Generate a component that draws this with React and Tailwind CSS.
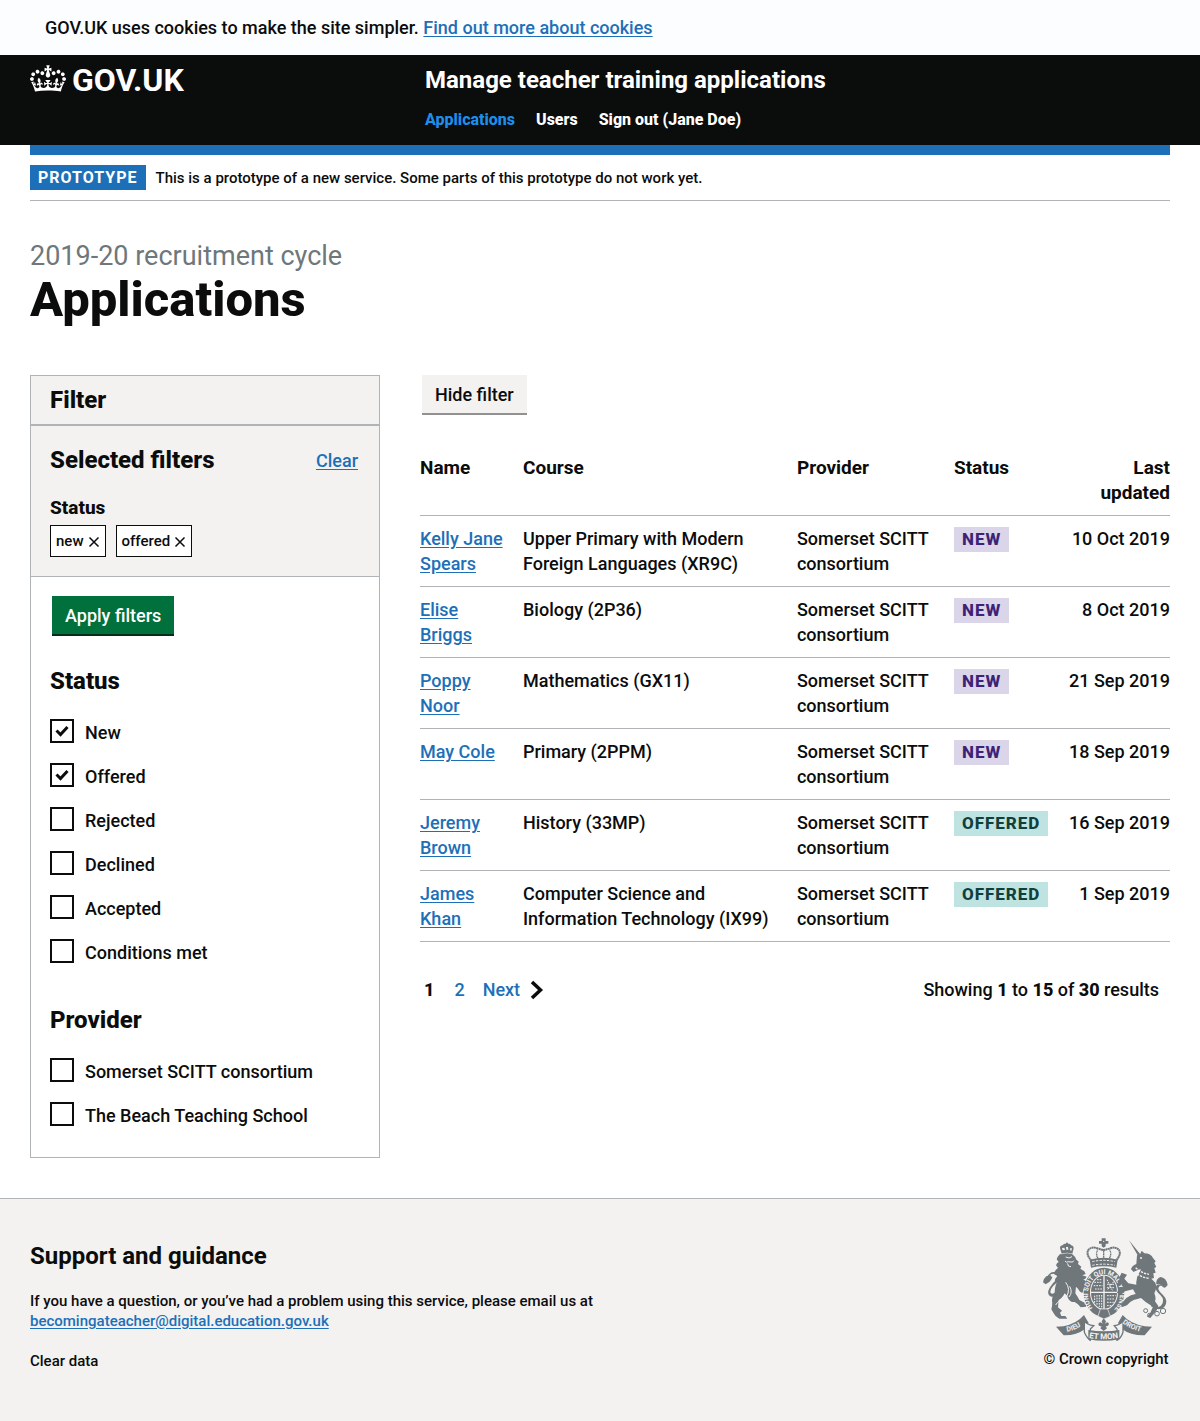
import React from "react";

const LINK = "text-[#1d70b8] underline underline-offset-2 hover:text-[#003078]";

const applications = [
  { name: "Kelly Jane Spears", course: "Upper Primary with Modern Foreign Languages (XR9C)", status: "New", date: "10 Oct 2019" },
  { name: "Elise Briggs", course: "Biology (2P36)", status: "New", date: "8 Oct 2019" },
  { name: "Poppy Noor", course: "Mathematics (GX11)", status: "New", date: "21 Sep 2019" },
  { name: "May Cole", course: "Primary (2PPM)", status: "New", date: "18 Sep 2019" },
  { name: "Jeremy Brown", course: "History (33MP)", status: "Offered", date: "16 Sep 2019" },
  { name: "James Khan", course: "Computer Science and Information Technology (IX99)", status: "Offered", date: "1 Sep 2019" },
];

const statusFilters = [
  { label: "New", checked: true },
  { label: "Offered", checked: true },
  { label: "Rejected" },
  { label: "Declined" },
  { label: "Accepted" },
  { label: "Conditions met" },
];

const providerFilters = [
  { label: "Somerset SCITT consortium" },
  { label: "The Beach Teaching School" },
];

function Crown() {
  return (
    <svg aria-hidden="true" viewBox="0 0 132 97" className="h-[27px] w-9" fill="currentColor">
      <path
        fillRule="evenodd"
        d="M25 30.2c3.5 1.5 7.7-.2 9.1-3.7 1.5-3.6-.2-7.8-3.9-9.2-3.6-1.4-7.6.3-9.1 3.9-1.4 3.5.3 7.5 3.9 9zM9 39.5c3.6 1.5 7.8-.2 9.2-3.7 1.5-3.6-.2-7.8-3.9-9.1-3.6-1.5-7.6.2-9.1 3.8-1.4 3.5.3 7.5 3.8 9zM4.4 57.2c3.5 1.5 7.7-.2 9.1-3.8 1.5-3.6-.2-7.7-3.9-9.1-3.5-1.5-7.6.3-9.1 3.8-1.4 3.5.3 7.6 3.9 9.1zm38.3-21.4c3.5 1.5 7.7-.2 9.1-3.8 1.5-3.6-.2-7.7-3.9-9.1-3.6-1.5-7.6.3-9.1 3.8-1.3 3.6.4 7.7 3.9 9.1zm64.4-5.6c-3.6 1.5-7.8-.2-9.1-3.7-1.5-3.6.2-7.8 3.8-9.2 3.6-1.4 7.7.3 9.2 3.9 1.3 3.5-.4 7.5-3.9 9zm15.9 9.3c-3.6 1.5-7.7-.2-9.1-3.7-1.5-3.6.2-7.8 3.7-9.1 3.6-1.5 7.7.2 9.2 3.8 1.5 3.5-.3 7.5-3.8 9zm4.7 17.7c-3.6 1.5-7.8-.2-9.2-3.8-1.5-3.6.2-7.7 3.9-9.1 3.6-1.5 7.7.3 9.2 3.8 1.3 3.5-.4 7.6-3.9 9.1zM89.3 35.8c-3.6 1.5-7.8-.2-9.2-3.8-1.4-3.6.2-7.7 3.9-9.1 3.6-1.5 7.7.3 9.2 3.8 1.4 3.6-.3 7.7-3.9 9.1zM69.7 17.7l8.9 4.7V9.3l-8.9 2.8c-.2-.3-.5-.6-.9-.9L72.4 0H59.6l3.5 11.2c-.3.3-.6.5-.9.9l-8.8-2.8v13.1l8.8-4.7c.3.3.6.7.9.9l-5 15.4v.1c-.2.8-.4 1.6-.4 2.4 0 4.1 3.1 7.5 7 8.1h.2c.3 0 .7.1 1 .1.4 0 .7 0 1-.1h.2c4-.6 7.1-4.1 7.1-8.1 0-.8-.1-1.7-.4-2.4V34l-5.1-15.4c.4-.2.7-.6 1-.9zM66 92.8c16.9 0 32.8 1.1 47.1 3.2 4-16.9 8.9-26.7 14-33.5l-9.6-3.4c1 4.9 1.1 7.2 0 10.2-1.5-1.4-3-4.3-4.2-8.7L108.6 76c2.8-2 5-3.2 7.5-3.3-4.4 9.4-10 11.9-13.6 11.2-4.3-.8-6.3-4.6-5.6-7.9 1-4.7 5.7-5.9 8-.5 4.3-8.7-3-11.4-7.6-8.8 7.1-7.2 7.9-13.5 2.1-21.1-8 6.1-8.1 12.3-4.5 20.8-4.7-5.4-12.1-2.5-9.5 6.2 3.4-5.2 7.9-2 7.2 3.1-.6 4.3-6.4 7.8-13.5 7.2-10.3-.9-10.9-8-11.2-13.8 2.5-.5 7.1 1.8 11 7.3L80.2 60c-4.1 4.4-8 5.3-12.3 5.4 1.4-4.4 8-11.6 8-11.6H55.5s6.4 7.2 7.9 11.6c-4.2-.1-8-1-12.3-5.4l1.4 16.4c3.9-5.5 8.5-7.7 10.9-7.3-.3 5.8-.9 12.8-11.1 13.8-7.2.6-12.9-2.9-13.5-7.2-.7-5 3.8-8.3 7.1-3.1 2.7-8.7-4.6-11.6-9.4-6.2 3.7-8.5 3.6-14.7-4.6-20.8-5.8 7.6-5 13.9 2.2 21.1-4.7-2.6-11.9.1-7.7 8.8 2.3-5.5 7.1-4.2 8.1.5.7 3.3-1.3 7.1-5.7 7.9-3.5.7-9-1.8-13.5-11.2 2.5.1 4.7 1.3 7.5 3.3l-4.7-15.4c-1.2 4.4-2.7 7.2-4.3 8.7-1.1-3-.9-5.3 0-10.2l-9.5 3.4c5 6.9 9.9 16.7 14 33.5 14.8-2.1 30.8-3.2 47.7-3.2z"
      />
    </svg>
  );
}

function Crest() {
  const ink = "#6f777b";
  const paper = "#f3f2f1";
  return (
    <svg aria-hidden="true" viewBox="33 24 384 312" className="h-[104px] w-32" fill={ink}>
      {/* lion's crown */}
      <path d="M92 74l-5-17q0-8 8-8 3-6 9-4l1-4h6l1 4q6-2 8 4 8 1 8 9l-4 16q-16-5-32 0z" />
      <path d="M95 64l-2-7 7-1 2 7zM106 62l-1-8h6l1 8zM117 64l1-7 5 1-2 7z" fill={paper} />
      {/* lion */}
      <path d="M93 76q15-6 31 0l9 9 2 6 8 7-2 7 10 8-3 6 12 8 4 8-10 4 13 4q-3 8-10 8l8 6-6 12 10 6-12 6-2 10q-8 0-14-12l-6-6-2 20q8 12 12 20l16 8q6 6 4 12l-16 2q-6-10-18-16l-8 0q-12-6-14-18l-8-8q-8 16-18 20l-2 22 12 10-6 6 4 10h12l6 8h-24q-14-8-18-18l-6-10q4-14 2-26 0-14 8-20 0-22 6-34-8-4-4-12l6-8-10-6q2-12 12-18l-6-8q2-8 8-10l-6-8q2-8 10-16z" />
      <path d="M104 84l10 3 9-4M102 96q4 6 10 2l8 1q6 2 8-4M110 103l2 8 8 2" fill="none" stroke={paper} strokeWidth="3" />
      <path d="M86 190q-16 18-28 12-12-8-2-26 8-14 20-24 12-14-8-18-12 0-20 14 2-12 14-18 20-4 24 10 2 14-14 26-14 12-14 24 4 12 26-10" />
      <path d="M36 160l8 6 12-8 8-12-6-8-12 4q-8 6-10 18z" />
      <path d="M104 160q16 20 2 44M116 172q10 18-2 32M88 214q-10 6-14 14" fill="none" stroke={paper} strokeWidth="3" />
      {/* central crown */}
      <path d="M212 28h12v8h8v8h-8v8l-6 4-6-4v-8h-8v-8h8z" />
      <circle cx="218" cy="37" r="2" fill={paper} />
      <g fill="none" stroke={ink}>
        <path d="M182 96q-18-20-10-33 10-12 30-4 12 4 16 4t16-4q20-8 30 4 8 13-10 33" strokeWidth="6" strokeDasharray="6 1" />
        <path d="M204 92q-12-14-4-30M232 92q12-14 4-30M218 60v34" strokeWidth="4" strokeDasharray="4 1" />
      </g>
      <path d="M176 92q42-12 84 0l-4 24q-38-8-76 0z" />
      <path d="M184 98q34-8 68 0M184 109q34-7 68 0" fill="none" stroke={paper} strokeWidth="3" strokeDasharray="7 4" />
      {/* garter and shield */}
      <ellipse cx="219" cy="190" rx="61" ry="74" />
      <ellipse cx="219" cy="190" rx="42" ry="53" fill={paper} />
      <ellipse cx="219" cy="190" rx="39" ry="50" />
      <path d="M219 140v101M180 190h78" stroke={paper} strokeWidth="4" />
      <path
        d="M190 160h24M188 170h26M192 180h22M198 152h14M228 152l16 32M248 158l-18 24M228 166h24M228 176h24M191 200v22M198 198v30M205 198v36M212 198v38M228 200h26M228 210h24M228 220h20M228 230h14"
        stroke={paper}
        strokeWidth="3"
        strokeDasharray="5 3"
      />
      <path id="garter-arc" d="M186 239a48 60 0 1 1 66 0" fill="none" />
      <text fill={paper} fontSize="20" fontWeight="700" fontFamily="Roboto, sans-serif">
        <textPath href="#garter-arc" startOffset="2">HONI SOIT QUI MAL Y PENSE</textPath>
      </text>
      <path d="M208 240l22 0 8 22-19 8-18-8z" stroke={paper} strokeWidth="2" />
      {/* unicorn */}
      <path d="M294 34l34 42-7 4z" />
      <path d="M318 79l10-5 4-9 8 8q20 0 26 14l8 10-4 5 6 12-6 3 4 14-7 2 2 14-8 2 12 12q6 16-3 32 6 14 2 24l10 14q-2 12-14 24l-10 12-10-4 10-12 8-18-22-14-14-12-22 6q-14 6-20 16l-16 6-2-10 16-18q14-10 28-12l-8-14-24 6-14 12-10-8 6-14 12-2-6-14-6-14 8-16 16 6-8 12 12 14 24 4q-2-20 8-34l6-12-10 2-12 6-8-8q2-10 16-16z" />
      <circle cx="330" cy="87" r="3" fill={paper} />
      <path d="M314 116q16 16 40 20M311 128q18 18 44 20" fill="none" stroke={paper} strokeWidth="4" strokeDasharray="7 3" />
      <path d="M360 226q16 14 30 4 14-16-2-32-16-14-14-24 4-12 20-4-10-2-12 8 0 8 14 20 18 18 4 36-18 14-40-2z" />
      <path d="M376 166q-2-16 12-22 18 2 22 24-8 12-14 6l-10-8z" />
      <g fill="none" stroke={ink} strokeWidth="3">
        <circle cx="364" cy="182" r="5" />
        <circle cx="358" cy="210" r="5" />
        <circle cx="344" cy="245" r="6" />
        <circle cx="355" cy="258" r="5" />
        <circle cx="378" cy="254" r="7" />
        <circle cx="396" cy="246" r="8" />
      </g>
      {/* motto scroll */}
      <path d="M75 293l22-1q40-8 62-34l14 24-11 18q-26 20-64 19z" />
      <path d="M363 293l-22-1q-44-8-66-34l-14 24 12 18q26 20 68 19z" />
      <path d="M160 276q8 12 28 14l-10 10v34q-10-6-18-24zM276 276q-8 12-26 14l8 10v34q12-6 18-24z" fill={paper} stroke={ink} strokeWidth="4" />
      <path d="M172 303q48 8 93 0v28q-46 9-93 0z" />
      <path d="M218 268l7 9-3 8q8-10 12 0-2 8-10 7l4 6-10 8-10-8 4-6q-10 0-10-8 6-9 13 0l-3-7z" />
      <path id="motto-left" d="M108 308q30-4 56-28" fill="none" />
      <path id="motto-mid" d="M174 327q44 8 92-1" fill="none" />
      <path id="motto-right" d="M274 282q28 22 66 28" fill="none" />
      <g fill={paper} fontSize="21" fontWeight="700" fontFamily="Roboto, sans-serif">
        <text><textPath href="#motto-left">DIEU</textPath></text>
        <text fontSize="24"><textPath href="#motto-mid">ET MON</textPath></text>
        <text><textPath href="#motto-right">DROIT</textPath></text>
      </g>
    </svg>
  );
}

function StatusTag({ status }) {
  const tone = status === "New" ? "bg-[#dbd5e9] text-[#3d2375]" : "bg-[#bfe3e0] text-[#10403c]";
  return (
    <strong className={`block w-fit px-2 text-[17px] leading-[25px] font-extrabold tracking-[1px] uppercase ${tone}`}>
      {status}
    </strong>
  );
}

function Checkbox({ id, label, checked }) {
  return (
    <div className="flex h-11 items-center gap-[11px]">
      <span className="grid size-6 shrink-0">
        <input
          id={id}
          type="checkbox"
          defaultChecked={checked}
          className="peer col-start-1 row-start-1 size-6 appearance-none border-2 border-[#0b0c0c] bg-white"
        />
        <svg
          aria-hidden="true"
          viewBox="0 0 24 24"
          className="pointer-events-none invisible col-start-1 row-start-1 size-6 peer-checked:visible"
        >
          <path d="M6.500 11.500l4 4L17.500 8" fill="none" stroke="#0b0c0c" strokeWidth="3" />
        </svg>
      </span>
      <label htmlFor={id} className="pt-[2px]">{label}</label>
    </div>
  );
}

function FilterGroup({ title, name, items }) {
  return (
    <fieldset>
      <legend className="text-[24px] leading-[30px] font-extrabold">{title}</legend>
      <div className="mt-[13px]">
        {items.map((item, i) => (
          <Checkbox key={item.label} id={`${name}-${i}`} {...item} />
        ))}
      </div>
    </fieldset>
  );
}

function RemovableTag({ label }) {
  return (
    <a href="#" className="flex h-8 items-center gap-1 border border-[#0b0c0c] bg-white px-[5px] text-[15px] leading-5">
      {label}
      <svg aria-hidden="true" viewBox="0 0 12 12" className="mt-[2px] size-3">
        <path d="M1.500 1.500l9 9M10.500 1.500l-9 9" stroke="#0b0c0c" strokeWidth="1.500" fill="none" />
      </svg>
    </a>
  );
}

function FilterPanel() {
  return (
    <form className="w-[350px] shrink-0 border border-[#b1b4b6]">
      <div className="border-b-2 border-[#b1b4b6] bg-[#f3f2f1] px-[19px] py-[9px]">
        <h2 className="text-[24px] leading-[30px] font-extrabold">Filter</h2>
      </div>
      <div className="border-b border-[#b1b4b6] bg-[#f3f2f1] px-[19px] pt-[19px] pb-[19px]">
        <div className="flex items-center justify-between pr-[2px]">
          <h2 className="text-[24px] leading-[30px] font-extrabold">Selected filters</h2>
          <a href="#" className={LINK}>Clear</a>
        </div>
        <h3 className="mt-5 text-[19px] leading-[25px] font-extrabold">Status</h3>
        <div className="mt-[5px] flex gap-[10px]">
          <RemovableTag label="new" />
          <RemovableTag label="offered" />
        </div>
      </div>
      <div className="px-[19px] pt-[19px] pb-[21px]">
        <button type="button" className="ml-[2px] h-10 border-b-2 border-[#002d18] bg-[#00703c] px-[13px] text-white">
          Apply filters
        </button>
        <div className="mt-[30px] flex flex-col gap-8">
          <FilterGroup title="Status" name="status" items={statusFilters} />
          <FilterGroup title="Provider" name="provider" items={providerFilters} />
        </div>
      </div>
    </form>
  );
}

function ApplicationsTable() {
  return (
    <table className="w-full table-fixed border-collapse text-left">
      <colgroup>
        <col className="w-[13.733%]" />
        <col className="w-[36.533%]" />
        <col className="w-[20.933%]" />
        <col className="w-[15.067%]" />
        <col />
      </colgroup>
      <thead>
        <tr className="border-b border-[#b1b4b6] align-top text-[19px] font-extrabold">
          <th scope="col" className="py-[10px] pr-4">Name</th>
          <th scope="col" className="py-[10px] pr-4">Course</th>
          <th scope="col" className="py-[10px] pr-4">Provider</th>
          <th scope="col" className="py-[10px]">Status</th>
          <th scope="col" className="py-[10px] text-right">Last<br />updated</th>
        </tr>
      </thead>
      <tbody>
        {applications.map((row) => (
          <tr key={row.name} className="border-b border-[#b1b4b6] align-top">
            <td className="py-[10px] pr-4"><a href="#" className={LINK}>{row.name}</a></td>
            <td className="py-[10px] pr-4">{row.course}</td>
            <td className="py-[10px] pr-4">Somerset SCITT consortium</td>
            <td className="pt-[11px]"><StatusTag status={row.status} /></td>
            <td className="py-[10px] text-right whitespace-nowrap">{row.date}</td>
          </tr>
        ))}
      </tbody>
    </table>
  );
}

export default function App() {
  return (
    <div className="bg-white font-['Roboto',sans-serif] text-[18px] leading-[25px] font-medium text-[#0b0c0c]">
      <div className="bg-[#fbfdfe] px-[45px] py-[15px]">
        <p>
          GOV.UK uses cookies to make the site simpler.{" "}
          <a href="#" className={LINK}>Find out more about cookies</a>
        </p>
      </div>

      <header className="bg-[#0b0c0c] px-[30px] pt-[10px] text-white">
        <div className="flex h-20">
          <div className="w-[395px] shrink-0">
            <a href="#" className="flex w-fit items-start gap-[6px] text-[32px] leading-[30px] font-bold">
              <Crown />
              GOV.UK
            </a>
          </div>
          <div>
            <a href="#" className="text-[24px] leading-[30px] font-bold">Manage teacher training applications</a>
            <nav className="mt-[15px] flex gap-[21px] text-[16px] leading-5 font-extrabold">
              <a href="#" className="text-[#1d8feb]">Applications</a>
              <a href="#">Users</a>
              <a href="#">Sign out (Jane Doe)</a>
            </nav>
          </div>
        </div>
      </header>

      <div className="px-[30px]">
        <div className="h-[10px] bg-[#1d70b8]" />
        <div className="flex items-center gap-[10px] border-b border-[#b1b4b6] py-[10px]">
          <strong className="bg-[#1d70b8] px-2 text-[16px] leading-[25px] font-bold tracking-[1px] text-white uppercase">
            Prototype
          </strong>
          <span className="text-[15px] leading-5">
            This is a prototype of a new service. Some parts of this prototype do not work yet.
          </span>
        </div>

        <main className="pt-10 pb-10">
          <span className="block text-[27px] leading-[30px] font-normal text-[#6f777b]">2019-20 recruitment cycle</span>
          <h1 className="mt-1 text-[49px] leading-[50px] font-extrabold">Applications</h1>
          <div className="mt-[50px] flex items-start gap-10">
            <FilterPanel />
            <div className="min-w-0 flex-1">
              <button type="button" className="ml-[2px] h-10 border-b-2 border-[#929191] bg-[#f3f2f1] px-[13px]">
                Hide filter
              </button>
              <div className="mt-[30px]">
                <ApplicationsTable />
              </div>
              <div className="mt-[35px] flex items-center justify-between pr-[11px] pl-1">
                <nav aria-label="Pagination" className="flex items-center">
                  <span className="font-extrabold">1</span>
                  <a href="#" className="ml-5 text-[#1d70b8]">2</a>
                  <a href="#" className="ml-[18px] flex items-center gap-[10px] text-[#1d70b8]">
                    Next
                    <svg aria-hidden="true" viewBox="0 0 14 20" className="h-5 w-[14px]">
                      <path d="M2 2l8.500 8L2 18" fill="none" stroke="#0b0c0c" strokeWidth="3.500" />
                    </svg>
                  </a>
                </nav>
                <p>
                  Showing <b className="font-extrabold">1</b> to <b className="font-extrabold">15</b> of{" "}
                  <b className="font-extrabold">30</b> results
                </p>
              </div>
            </div>
          </div>
        </main>
      </div>

      <footer className="flex justify-between border-t border-[#b1b4b6] bg-[#f3f2f1] px-[30px] pt-[42px] pb-[50px] text-[15px] leading-5">
        <div>
          <h2 className="text-[24px] leading-[30px] font-bold">Support and guidance</h2>
          <p className="mt-5">
            If you have a question, or you’ve had a problem using this service, please email us at
            <br />
            <a href="#" className={LINK}>becomingateacher@digital.education.gov.uk</a>
          </p>
          <p className="mt-5"><a href="#">Clear data</a></p>
        </div>
        <div className="-mt-1 flex flex-col items-center gap-2">
          <Crest />
          <a href="#">© Crown copyright</a>
        </div>
      </footer>
    </div>
  );
}
